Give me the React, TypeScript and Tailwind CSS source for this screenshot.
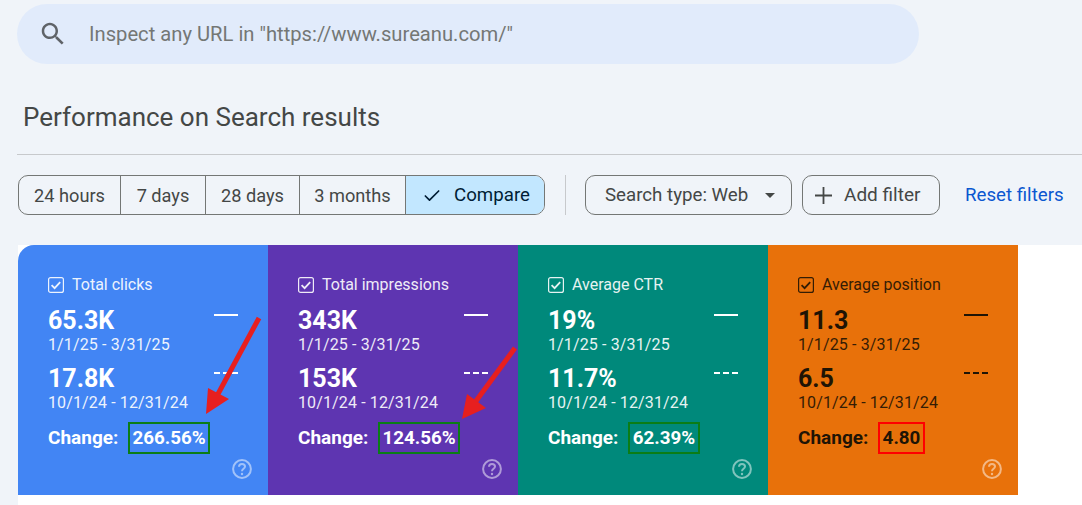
import { Check } from 'lucide-react';

const ranges = [
    { label: '24 hours', width: 'w-[102px]' },
    { label: '7 days', width: 'w-[85px]' },
    { label: '28 days', width: 'w-[94px]' },
    { label: '3 months', width: 'w-[106px]' },
];

interface Metric {
    label: string;
    current: string;
    previous: string;
    change: string;
    changeBox: string;
    card: string;
    text: string;
    line: string;
}

const metrics: Metric[] = [
    { label: 'Total clicks', current: '65.3K', previous: '17.8K', change: '266.56%', changeBox: 'w-[82px] border-[#0b7d16]', card: 'bg-[#4285f4] rounded-tl-[16px]', text: 'text-white', line: 'bg-white' },
    { label: 'Total impressions', current: '343K', previous: '153K', change: '124.56%', changeBox: 'w-[82px] border-[#0b7d16]', card: 'bg-[#5e35b1]', text: 'text-white', line: 'bg-white' },
    { label: 'Average CTR', current: '19%', previous: '11.7%', change: '62.39%', changeBox: 'w-[72px] border-[#0b7d16]', card: 'bg-[#00897b]', text: 'text-white', line: 'bg-white' },
    { label: 'Average position', current: '11.3', previous: '6.5', change: '4.80', changeBox: 'w-[47px] border-[#ff0000]', card: 'bg-[#e8710a]', text: 'text-[#1f1405]', line: 'bg-[#1f1405]' },
];

function CheckBox() {
    return (
        <svg viewBox="0 0 16 16" className="h-4 w-4 shrink-0" fill="none" stroke="currentColor">
            <rect x="0.6" y="0.6" width="14.8" height="14.8" rx="2" strokeWidth="1.2" />
            <path d="M3.6 8.2l3 3 5.6-6" strokeWidth="1.8" />
        </svg>
    );
}

function HelpIcon() {
    return (
        <svg viewBox="0 0 20 20" className="h-5 w-5 text-white opacity-50" fill="none" stroke="currentColor">
            <circle cx="10" cy="10" r="8.9" strokeWidth="2" />
            <path d="M7 7.8c0-1.7 1.3-2.8 3-2.8s3 1.1 3 2.5c0 2.3-3 2.3-3 4.7" strokeWidth="2" />
            <circle cx="10" cy="15" r="1.2" fill="currentColor" stroke="none" />
        </svg>
    );
}

function MetricCard({ metric }: { metric: Metric }) {
    return (
        <section className={`flex h-[250px] w-[250px] flex-col pl-[30px] pr-[30px] pt-[30px] ${metric.card} ${metric.text}`}>
            <div className="flex h-5 items-center gap-2 text-[16px] leading-5 opacity-90">
                <CheckBox />
                {metric.label}
            </div>
            <div className="mt-[12px] flex justify-between">
                <div className="text-[25px] font-bold leading-[28px]">{metric.current}</div>
                <div className={`mt-[7px] h-0.5 w-6 ${metric.line}`} />
            </div>
            <div className="text-[16px] leading-[20px] tracking-[0.13px] opacity-90">1/1/25 - 3/31/25</div>
            <div className="mt-[10px] flex justify-between">
                <div className="text-[25px] font-bold leading-[28px]">{metric.previous}</div>
                <div className="mt-[7px] flex h-0.5 w-6 gap-[3px]">
                    <span className={`h-0.5 w-[6px] ${metric.line}`} />
                    <span className={`h-0.5 w-[6px] ${metric.line}`} />
                    <span className={`h-0.5 w-[6px] ${metric.line}`} />
                </div>
            </div>
            <div className="text-[16px] leading-[20px] tracking-[0.13px] opacity-90">10/1/24 - 12/31/24</div>
            <div className="mt-[9px] flex items-center">
                <span className="w-[80px] text-[19px] font-bold leading-8">Change:</span>
                <span className={`flex h-8 items-center justify-center border-2 text-[18.8px] font-bold ${metric.changeBox}`}>
                    {metric.change}
                </span>
            </div>
            <div className="mt-[5px] flex justify-end">
                <div className="-mr-[14px]"><HelpIcon /></div>
            </div>
        </section>
    );
}

function RedArrow({ className, tail, neck, head }: { className: string; tail: string; neck: string; head: string }) {
    return (
        <svg viewBox="0 0 70 110" className={`absolute h-[110px] w-[70px] ${className}`}>
            <path d={`M${tail}L${neck}`} stroke="#e71f1f" strokeWidth="5" fill="none" />
            <polygon points={head} fill="#e71f1f" />
        </svg>
    );
}

export default function App() {
    return (
        <div className="relative h-[505px] w-[1082px] overflow-hidden bg-[#f0f4f9] font-['Roboto',sans-serif] text-[#444746]">
            <div className="pl-[17px] pt-1">
                <div className="flex h-[60px] w-[902px] items-center rounded-[30px] bg-[#e1ebfb] pl-[21px]">
                    <svg viewBox="0 0 24 24" className="h-[30px] w-[30px] text-[#5f6368]" fill="currentColor">
                        <path d="M15.5 14h-.79l-.28-.27C15.41 12.59 16 11.11 16 9.5 16 5.91 13.09 3 9.5 3S3 5.91 3 9.5 5.91 16 9.5 16c1.61 0 3.09-.59 4.23-1.57l.27.28v.79l5 4.99L20.49 19l-4.99-5zm-6 0C7.01 14 5 11.99 5 9.5S7.01 5 9.5 5 14 7.01 14 9.5 11.99 14 9.5 14z" />
                    </svg>
                    <span className="ml-[21px] text-[20.2px] text-[#747775]">Inspect any URL in "https://www.sureanu.com/"</span>
                </div>
            </div>

            <h1 className="ml-[23px] mt-[35px] text-[26px] font-normal leading-[36px] text-[#444746]">Performance on Search results</h1>

            <div className="ml-[17px] mt-[19px] border-t border-[#c7c9cc]" />

            <div className="ml-[18px] mt-5 flex h-10 items-center">
                <div className="flex h-10 overflow-hidden rounded-[10px] border border-[#747775] text-[18.2px]">
                    {ranges.map((range) => (
                        <div key={range.label} className={`flex items-center justify-center border-r border-[#747775] pt-px ${range.width}`}>
                            {range.label}
                        </div>
                    ))}
                    <div className="flex w-[138px] items-center justify-center gap-[12px] bg-[#c2e7ff] pl-[2px] pt-px text-[18.7px] text-[#001d35]">
                        <Check className="h-5 w-5" strokeWidth={2} />
                        Compare
                    </div>
                </div>
                <div className="ml-5 h-10 border-l border-[#c7c9cc]" />
                <div className="ml-[19px] flex h-10 w-[207px] items-center rounded-[10px] border border-[#747775] pl-[19px] pt-px text-[18.7px]">
                    Search type: Web
                    <svg viewBox="0 0 10 5" className="ml-[17px] h-[5px] w-[10px]" fill="currentColor"><path d="M0 0h10L5 5z" /></svg>
                </div>
                <div className="ml-[10px] flex h-10 w-[138px] items-center rounded-[10px] border border-[#747775] pl-3 pt-px text-[19px]">
                    <svg viewBox="0 0 17 17" className="h-[17px] w-[17px]" fill="currentColor"><path d="M7.6 0h1.8v7.6H17v1.8H9.4V17H7.6V9.4H0V7.6h7.6z" /></svg>
                    <span className="ml-3">Add filter</span>
                </div>
                <span className="ml-[25px] pt-px text-[18.7px] text-[#0b57d0]">Reset filters</span>
            </div>

            <div className="ml-[18px] mt-[30px] flex bg-white pb-[10px]">
                {metrics.map((metric) => (
                    <MetricCard key={metric.label} metric={metric} />
                ))}
            </div>

            <RedArrow className="left-[200px] top-[310px]" tail="59 8" neck="18 84" head="6,104 8,78 29,89" />
            <RedArrow className="left-[456px] top-[340px]" tail="59 8" neck="20 61" head="6,79 11,54 30,68" />
        </div>
    );
}
